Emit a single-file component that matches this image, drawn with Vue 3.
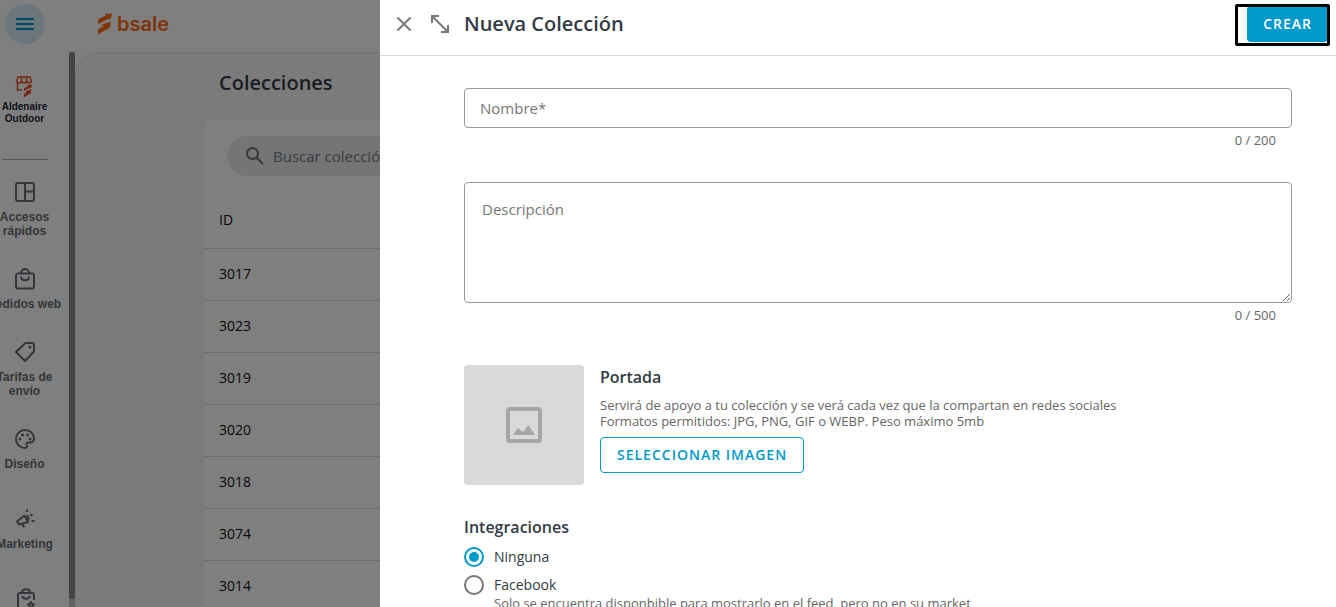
<script setup>
import { ref } from 'vue'

const name = ref('')
const description = ref('')
const integration = ref('none')

const shortcuts = [
    { icon: 'layout', lines: ['Accesos', 'rápidos'] },
    { icon: 'bag', lines: ['Pedidos web'] },
    { icon: 'tag', lines: ['Tarifas de', 'envío'] },
    { icon: 'palette', lines: ['Diseño'] }
]

const tools = [
    { icon: 'megaphone', lines: ['Marketing'] },
    { icon: 'bagStar', lines: [] }
]

const icons = {
    layout: 'M5 3h14a2 2 0 0 1 2 2v14a2 2 0 0 1-2 2H5a2 2 0 0 1-2-2V5a2 2 0 0 1 2-2zM12 3v18M12 11.500h9',
    bag: 'M5 6.500h14a2 2 0 0 1 2 2v11a2 2 0 0 1-2 2H5a2 2 0 0 1-2-2v-11a2 2 0 0 1 2-2zM8 6.500c0-6 8-6 8 0M8 9.500c0 5 8 5 8 0',
    tag: 'M12.500 3H19a2 2 0 0 1 2 2v6.500L12 21 3 12z',
    palette: 'M12 3a9 9 0 0 0 0 18c2 0 2.500-1.500 1.700-2.800-.8-1.400 0-2.700 1.600-2.700H17c2.500 0 4-1.700 4-4C21 6.500 17 3 12 3z',
    megaphone: 'M4 14.500l7.500-6 3.500 6.500-9 2.500zM9.500 17l1.500 3.500M14.500 2.500l-.8 2.500M19.500 7.500l-2.500 1.200M18.500 14h3M13.500 8.500c2 .8 2.500 3 1.500 4.500',
    bagStar: 'M11.500 21H7a2 2 0 0 1-2-2V8a2 2 0 0 1 2-2h12a2 2 0 0 1 2 2v5M9 6c0-5 8-5 8 0M9 9c1 3.500 7 3.500 8 0M18 15l1 2 2 .5-1.500 1.500.5 2-2-1-2 1 .5-2-1.500-1.500 2-.5z'
}

const dots = {
    tag: [[17, 7]],
    palette: [[7, 12], [9.5, 8], [14.5, 8], [17, 12]]
}

const rows = [3017, 3023, 3019, 3020, 3018, 3074, 3014]
</script>

<template>
    <div class="app">
        <header class="topbar">
            <button class="menu-button" type="button" aria-label="Menú">
                <svg width="20" height="14" viewBox="0 0 20 14">
                    <path d="M1 2h18M1 7h18M1 12h18" stroke="currentColor" stroke-width="2" />
                </svg>
            </button>
            <a class="brand" href="#">
                <svg width="15" height="22" viewBox="0 0 15 22" fill="currentColor">
                    <path d="M1 11V8q0-1.500 1.500-2.500L9 2.500 8 1l7-.5-1.500 6.500-1-1.500zM1 21.500V17q0-1 1-1.500l5-2.500-3-1 9.500-3.500v4q0 1.500-1.500 2.500z" />
                </svg>
                <span>bsale</span>
            </a>
        </header>

        <div class="body">
            <nav class="sidebar">
                <div class="sidebar-content">
                    <a class="store" href="#">
                        <svg width="18" height="22" viewBox="0 0 18 22" fill="none" stroke="currentColor" stroke-width="1.500">
                            <path d="M3 1h12l1.500 4q-.5 2-2.500 2t-2.500-2q-.5 2-2.500 2T6.500 5Q6 7 4 7T1.500 5zM6.500 1v4M11.500 1v4M2.500 7v7H7" />
                            <path d="M9 15v-2.500l4-2.500-.5-1 4.500-.5-1 4-1-1zM9 21.500V18l2.500-2-1-.5 5.500-2.500V17z" fill="currentColor" stroke="none" />
                        </svg>
                        <span>Aldenaire<br>Outdoor</span>
                    </a>
                    <hr class="sidebar-divider">
                    <div v-for="(group, g) in [shortcuts, tools]" :key="g" class="nav-group"
                        :class="{ 'nav-group-tools': g === 1 }">
                        <a v-for="item in group" :key="item.icon" class="nav-item" href="#">
                            <svg width="24" height="24" viewBox="0 0 24 24" fill="none" stroke="currentColor"
                                stroke-width="2" stroke-linejoin="round">
                                <path :d="icons[item.icon]" />
                                <circle v-for="dot in dots[item.icon]" :key="dot[0]" :cx="dot[0]" :cy="dot[1]" r="1.500"
                                    fill="currentColor" stroke="none" />
                            </svg>
                            <span v-for="line in item.lines" :key="line">{{ line }}</span>
                        </a>
                    </div>
                </div>
                <div class="scroll-track">
                    <div class="scroll-thumb"></div>
                </div>
            </nav>

            <main class="page">
                <h1 class="page-title">Colecciones</h1>
                <section class="card">
                    <label class="search">
                        <svg width="24" height="24" viewBox="0 0 24 24" fill="none" stroke="currentColor" stroke-width="2">
                            <circle cx="9.500" cy="9.500" r="5.500" />
                            <path d="M13.500 13.500l6.500 6.500" />
                        </svg>
                        <input type="search" placeholder="Buscar colección" aria-label="Buscar colección">
                    </label>
                    <table class="collections">
                        <thead>
                            <tr>
                                <th>ID</th>
                            </tr>
                        </thead>
                        <tbody>
                            <tr v-for="id in rows" :key="id">
                                <td>{{ id }}</td>
                            </tr>
                        </tbody>
                    </table>
                </section>
            </main>
        </div>

        <div class="scrim"></div>

        <aside class="drawer">
            <header class="drawer-header">
                <button class="icon-button" type="button" aria-label="Cerrar">
                    <svg width="24" height="24" viewBox="0 0 24 24" fill="none" stroke="currentColor" stroke-width="2">
                        <path d="M5.500 5.500l13 13M18.500 5.500l-13 13" />
                    </svg>
                </button>
                <button class="icon-button" type="button" aria-label="Expandir">
                    <svg width="24" height="24" viewBox="0 0 24 24" fill="none" stroke="currentColor" stroke-width="2">
                        <path d="M4 11V4h7M4 4l16 16M20 13v7h-7" />
                    </svg>
                </button>
                <h2 class="drawer-title">Nueva Colección</h2>
                <div class="submit">
                    <button class="button button-primary" type="submit" form="collection-form">CREAR</button>
                    <div class="submit-frame"></div>
                </div>
            </header>

            <form id="collection-form" class="form" @submit.prevent>
                <div class="field">
                    <input v-model="name" class="control" type="text" maxlength="200" placeholder="Nombre*"
                        aria-label="Nombre">
                    <span class="counter">{{ name.length }} / 200</span>
                </div>
                <div class="field">
                    <textarea v-model="description" class="control control-area" maxlength="500"
                        placeholder="Descripción" aria-label="Descripción"></textarea>
                    <span class="counter">{{ description.length }} / 500</span>
                </div>

                <div class="cover">
                    <div class="cover-preview">
                        <svg width="36" height="36" viewBox="0 0 36 36">
                            <rect x="2" y="2" width="32" height="32" rx="2" fill="none" stroke="currentColor"
                                stroke-width="4" />
                            <path d="M7 28l5-7 5 4 5.500-7L29 28z" fill="currentColor" />
                        </svg>
                    </div>
                    <div class="cover-info">
                        <h3 class="section-title">Portada</h3>
                        <p class="hint">
                            Servirá de apoyo a tu colección y se verá cada vez que la compartan en redes sociales<br>
                            Formatos permitidos: JPG, PNG, GIF o WEBP. Peso máximo 5mb
                        </p>
                        <button class="button button-outlined" type="button">SELECCIONAR IMAGEN</button>
                    </div>
                </div>

                <fieldset class="integrations">
                    <legend class="section-title">Integraciones</legend>
                    <label class="option">
                        <input v-model="integration" type="radio" name="integration" value="none">
                        <span>Ninguna</span>
                    </label>
                    <label class="option">
                        <input v-model="integration" type="radio" name="integration" value="facebook">
                        <span>Facebook</span>
                    </label>
                    <p class="hint option-hint">Solo se encuentra disponbible para mostrarlo en el feed, pero no en su market</p>
                </fieldset>
            </form>
        </aside>
    </div>
</template>

<style>
body {
    margin: 0;
}
</style>

<style scoped>
* {
    box-sizing: border-box;
}

.app {
    position: relative;
    display: flex;
    flex-direction: column;
    height: 100vh;
    overflow: hidden;
    background: #fff;
    color: #333b45;
    font-family: "Open Sans", "Noto Sans", sans-serif;
    font-size: 14px;
}

a {
    color: inherit;
    text-decoration: none;
}

button,
input,
textarea {
    font-family: inherit;
}

h1,
h2,
h3,
p {
    margin: 0;
}

svg {
    display: block;
    flex-shrink: 0;
}

.topbar {
    display: flex;
    align-items: center;
    gap: 52px;
    height: 52px;
    padding: 0 5px 4px;
    flex-shrink: 0;
}

.menu-button {
    display: flex;
    align-items: center;
    justify-content: center;
    width: 40px;
    height: 40px;
    padding: 0;
    border: 0;
    border-radius: 50%;
    background: #d9eef6;
    color: #09c;
}

.brand {
    display: flex;
    align-items: center;
    gap: 5px;
    color: #ff6a13;
    font-family: Inter, sans-serif;
    font-size: 20px;
    font-weight: 600;
}

.body {
    display: flex;
    flex: 1;
    min-height: 0;
}

.sidebar {
    display: flex;
    width: 75px;
    flex-shrink: 0;
}

.sidebar-content {
    display: flex;
    flex-direction: column;
    align-items: center;
    width: 49px;
    margin-right: 20px;
    padding-top: 24px;
    font-family: "Liberation Sans", Arial, sans-serif;
    font-weight: 700;
}

.store {
    display: flex;
    flex-direction: column;
    align-items: center;
    gap: 3px;
    color: #f05023;
    text-align: center;
    font-size: 10px;
    line-height: 12px;
}

.store span {
    color: #222b36;
}

.sidebar-divider {
    width: 46px;
    margin: 34px 0 20px;
    border: 0;
    border-top: 1px solid #aaa;
}

.nav-group {
    display: flex;
    flex-direction: column;
    align-items: center;
    gap: 29px;
}

.nav-group-tools {
    gap: 36px;
    margin-top: 36px;
}

.nav-item {
    display: flex;
    flex-direction: column;
    align-items: center;
    color: #666d75;
    font-size: 12px;
    line-height: 14px;
    white-space: nowrap;
}

.nav-item svg {
    margin-bottom: 6px;
}

.scroll-track {
    width: 6px;
    padding-bottom: 8px;
    background: #c4c4c4;
}

.scroll-thumb {
    height: 100%;
    border-radius: 3px;
    background: #888;
}

.page {
    flex: 1;
    padding: 15px 127px 0;
    border-top: 1px solid #e8e8e8;
    border-left: 1px solid #e8e8e8;
    border-top-left-radius: 24px;
    background: #f7f7f7;
}

.page-title {
    margin: 0 16px 21px;
    font-size: 20px;
    font-weight: 600;
    line-height: 30px;
}

.card {
    padding-top: 16px;
    border: 1px solid #eee;
    border-radius: 8px;
    background: #fff;
}

.search {
    display: flex;
    align-items: center;
    gap: 6px;
    height: 40px;
    margin: 0 23px 16px;
    padding: 0 16px;
    border-radius: 20px;
    background: #e8eaee;
    color: #6c6c6c;
}

.search input {
    flex: 1;
    padding: 0;
    border: 0;
    outline: 0;
    background: none;
    font-size: 15px;
}

.search input::placeholder,
.control::placeholder {
    color: #777;
    opacity: 1;
}

.collections {
    width: 100%;
    border-collapse: collapse;
    color: #111;
    text-align: left;
}

.collections th,
.collections td {
    height: 52px;
    padding: 0 15px 2px;
    border-bottom: 1px solid #d8d8d8;
    font-weight: 400;
}

.collections th {
    height: 56px;
    padding-bottom: 0;
}

.scrim {
    position: absolute;
    inset: 0;
    background: rgba(0, 0, 0, 0.5);
}

.drawer {
    position: absolute;
    top: 0;
    right: 0;
    bottom: 0;
    left: 380px;
    overflow: hidden;
    background: #fff;
}

.drawer-header {
    display: flex;
    align-items: center;
    gap: 12px;
    height: 56px;
    padding: 0 8px 8px 12px;
    border-bottom: 1px solid #d8d8d8;
}

.icon-button {
    padding: 0;
    border: 0;
    background: none;
    color: #777;
}

.drawer-title {
    flex: 1;
    font-size: 20px;
    font-weight: 600;
}

.submit {
    position: relative;
}

.submit-frame {
    position: absolute;
    top: -2px;
    right: -2px;
    bottom: -4px;
    left: -12px;
    border: 3px solid #000;
    border-radius: 2px;
    pointer-events: none;
}

.button {
    height: 36px;
    padding: 0 16px 1px;
    border: 0;
    border-radius: 4px;
    font-size: 14px;
    font-weight: 600;
    letter-spacing: 1px;
}

.button-primary {
    background: #09c;
    color: #fff;
}

.button-outlined {
    border: 1px solid #09c;
    background: #fff;
    color: #09c;
}

.form {
    padding: 32px 44px 0 84px;
}

.field {
    display: flex;
    flex-direction: column;
    margin-bottom: 32px;
}

.control {
    width: 100%;
    height: 40px;
    padding: 0 15px;
    border: 1px solid #999;
    border-radius: 4px;
    outline: 0;
    background: #fff;
    color: #333b45;
    font-size: 15px;
}

.control-area {
    height: 121px;
    padding: 15px 17px;
    line-height: 22px;
    resize: vertical;
}

.counter {
    align-self: flex-end;
    margin-right: 16px;
    padding-top: 2px;
    color: #666;
    font-size: 13px;
    line-height: 20px;
}

.cover {
    display: flex;
    gap: 16px;
    padding-top: 8px;
}

.cover-preview {
    display: flex;
    align-items: center;
    justify-content: center;
    width: 120px;
    height: 120px;
    border-radius: 4px;
    background: #d9d9d9;
    color: #a6a6a6;
}

.section-title {
    padding: 0;
    font-size: 16px;
    font-weight: 600;
    line-height: 24px;
}

.hint {
    color: #666;
    font-size: 13px;
    line-height: 16px;
}

.cover-info .hint {
    margin: 8px 0;
}

.integrations {
    margin: 30px 0 0;
    padding: 0;
    border: 0;
}

.integrations .section-title {
    margin-bottom: 8px;
}

.option {
    display: flex;
    align-items: center;
    gap: 10px;
    height: 20px;
    line-height: 18px;
}

.option + .option {
    margin-top: 8px;
}

.option input {
    display: grid;
    place-content: center;
    width: 20px;
    height: 20px;
    margin: 0;
    border: 2px solid #757575;
    border-radius: 50%;
    appearance: none;
}

.option input:checked {
    border-color: #09c;
}

.option input:checked::before {
    content: "";
    width: 10px;
    height: 10px;
    border-radius: 50%;
    background: #09c;
}

.option-hint {
    padding-left: 30px;
}
</style>
